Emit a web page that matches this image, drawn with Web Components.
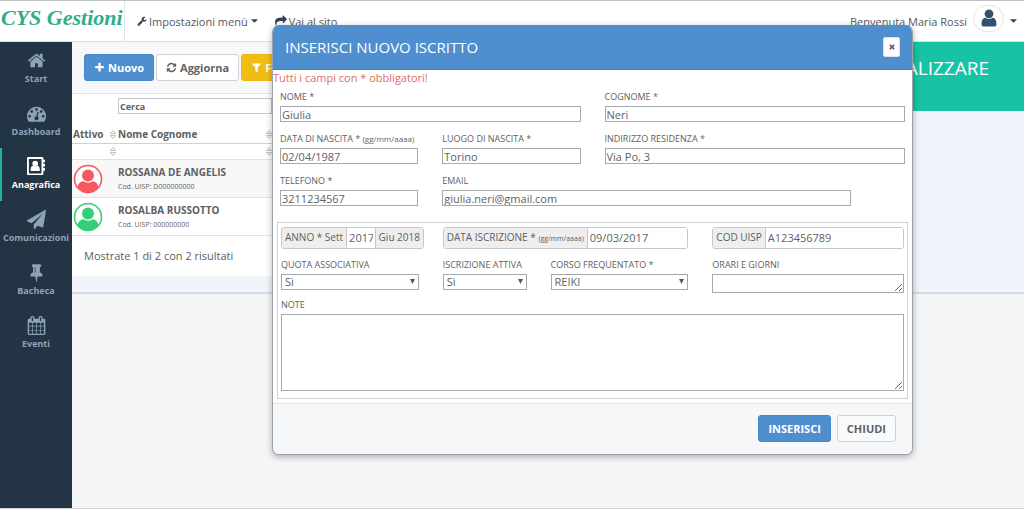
<!DOCTYPE html>
<html lang="it">
<head>
<meta charset="utf-8">
<title>CYS Gestioni</title>
<style>
  body { margin: 0; font-family: "Open Sans", "Noto Sans", sans-serif; font-size: 11px; color: #5e6062; background: #fff; }
</style>
</head>
<body>
<gestioni-app></gestioni-app>

<script>
const ICONS = {
  home: ['0 0 1792 1792', '<path d="M1472 992v480q0 26-19 45t-45 19h-384v-384h-256v384h-384q-26 0-45-19t-19-45v-480q0-1 .5-3t.5-3l575-474 575 474q1 2 1 6zm223-69l-62 74q-8 9-21 11h-3q-13 0-21-7l-692-577-692 577q-12 8-24 7-13-2-21-11l-62-74q-8-10-7-23.5t11-21.5l719-599q32-26 76-26t76 26l244 204v-195q0-14 9-23t23-9h192q14 0 23 9t9 23v408l219 182q10 8 11 21.5t-7 23.5z"/>'],
  gauge: ['0 0 1792 1792', '<path d="M384 1152q0-53-37.5-90.5t-90.5-37.5-90.5 37.5-37.5 90.5 37.5 90.5 90.5 37.5 90.5-37.5 37.5-90.5zm192-448q0-53-37.5-90.5t-90.5-37.5-90.5 37.5-37.5 90.5 37.5 90.5 90.5 37.5 90.5-37.5 37.5-90.5zm428 481l101-382q6-26-7.5-48.5t-38.5-29.5-48 6.5-30 39.5l-101 382q-60 5-107 43.5t-63 98.5q-20 77 20 146t117 89 146-20 89-117q16-60-6-117t-72-91zm660-33q0-53-37.5-90.5t-90.5-37.5-90.5 37.5-37.5 90.5 37.5 90.5 90.5 37.5 90.5-37.5 37.5-90.5zm-640-640q0-53-37.5-90.5t-90.5-37.5-90.5 37.5-37.5 90.5 37.5 90.5 90.5 37.5 90.5-37.5 37.5-90.5zm448 192q0-53-37.5-90.5t-90.5-37.5-90.5 37.5-37.5 90.5 37.5 90.5 90.5 37.5 90.5-37.5 37.5-90.5zm320 448q0 261-141 483-19 29-54 29h-1402q-35 0-54-29-141-221-141-483 0-182 71-348t191-286 286-191 348-71 348 71 286 191 191 286 71 348z"/>'],
  book: ['0 0 18 18', '<path fill-rule="evenodd" d="M1 0h13.500a1 1 0 0 1 1 1v1.500h1.500v2.500h-1.500v1.500h1.500v2.500h-1.500v1.500h1.500v2.500h-1.500v3a1 1 0 0 1-1 1H1a1 1 0 0 1-1-1V1a1 1 0 0 1 1-1zm.8 1.800v13.900h11.900V1.800z"/><circle cx="7.800" cy="6.200" r="2.700"/><path d="M3.500 13.200v-1.700c0-2 1-3 2.300-3.100q2 1.400 4 0c1.400.1 2.300 1.100 2.300 3.100v1.700z"/>'],
  plane: ['0 0 1792 1792', '<path d="M1764 11q33 24 27 64l-256 1536q-5 29-32 45-14 8-31 8-11 0-24-5l-453-185-242 295q-18 23-49 23-13 0-22-4-19-7-30.500-23.500t-11.500-36.500v-349l864-1059-1069 925-395-162q-37-14-40-55-2-40 32-59l1664-960q15-9 32-9 20 0 36 11z"/>'],
  pin: ['0 0 1792 1792', '<path d="M800 864v-448q0-14-9-23t-23-9-23 9-9 23v448q0 14 9 23t23 9 23-9 9-23zm672 352q0 26-19 45t-45 19h-429l-51 483q-2 12-10.500 20.500t-20.500 8.500h-1q-27 0-32-27l-76-485h-404q-26 0-45-19t-19-45q0-123 78.500-221.500t177.500-98.500v-512q-52 0-90-38t-38-90 38-90 90-38h640q52 0 90 38t38 90-38 90-90 38v512q99 0 177.500 98.500t78.500 221.500z"/>'],
  calendar: ['0 0 1792 1792', '<path d="M192 1664h288v-288h-288v288zm352 0h320v-288h-320v288zm-352-352h288v-320h-288v320zm352 0h320v-320h-320v320zm-352-384h288v-288h-288v288zm736 736h320v-288h-320v288zm-384-736h320v-288h-320v288zm768 736h288v-288h-288v288zm-384-352h320v-320h-320v320zm-352-864v-288q0-13-9.500-22.500t-22.500-9.500h-64q-13 0-22.500 9.500t-9.500 22.500v288q0 13 9.500 22.500t22.500 9.500h64q13 0 22.500-9.500t9.500-22.500zm736 864h288v-320h-288v320zm-384-384h320v-288h-320v288zm384 0h288v-288h-288v288zm32-480v-288q0-13-9.500-22.500t-22.500-9.500h-64q-13 0-22.500 9.500t-9.500 22.500v288q0 13 9.500 22.500t22.500 9.500h64q13 0 22.500-9.500t9.500-22.500zm384-64v1280q0 52-38 90t-90 38h-1408q-52 0-90-38t-38-90v-1280q0-52 38-90t90-38h128v-96q0-66 47-113t113-47h64q66 0 113 47t47 113v96h384v-96q0-66 47-113t113-47h64q66 0 113 47t47 113v96h128q52 0 90 38t38 90z"/>'],
  wrench: ['0 0 1792 1792', '<path d="M448 1472q0-26-19-45t-45-19-45 19-19 45 19 45 45 19 45-19 19-45zm644-420l-682 682q-37 37-90 37-52 0-91-37l-106-108q-38-36-38-90 0-53 38-91l681-681q39 98 114.500 173.500t173.500 114.500zm634-435q0 39-23 106-47 134-164.500 217.500t-258.500 83.500q-185 0-316.500-131.500t-131.500-316.500 131.500-316.500 316.500-131.500q58 0 121.500 16.500t107.500 46.500q16 11 16 28t-16 28l-293 169v224l193 107q5-3 79-48.500t135.500-81 70.500-35.500q15 0 23.500 10t8.500 25z"/>'],
  share: ['0 0 1792 1792', '<path d="M1792 640q0 26-19 45l-512 512q-19 19-45 19t-45-19-19-45v-256h-224q-98 0-175.500 6t-154 21.500-133 42.500-105.500 69.500-80 101-48.500 138.500-17.500 181q0 55 5 123 0 6 2.500 23.500t2.500 26.500q0 15-8.500 25t-23.500 10q-16 0-28-17-7-9-13-22t-13.500-30-10.500-24q-127-285-127-451 0-199 53-333 162-403 875-403h224v-256q0-26 19-45t45-19 45 19l512 512q19 19 19 45z"/>'],
  plus: ['0 0 1792 1792', '<path d="M1600 736v192q0 40-28 68t-68 28h-416v416q0 40-28 68t-68 28h-192q-40 0-68-28t-28-68v-416h-416q-40 0-68-28t-28-68v-192q0-40 28-68t68-28h416v-416q0-40 28-68t68-28h192q40 0 68 28t28 68v416h416q40 0 68 28t28 68z"/>'],
  refresh: ['0 0 1792 1792', '<path d="M1639 1056q0 5-1 7-64 268-268 434.500t-478 166.500q-146 0-282.500-55t-243.500-157l-129 129q-19 19-45 19t-45-19-19-45v-448q0-26 19-45t45-19h448q26 0 45 19t19 45-19 45l-137 137q71 66 161 102t187 36q134 0 250-65t186-179q11-17 53-117 8-23 30-23h192q13 0 22.500 9.500t9.500 22.500zm25-800v448q0 26-19 45t-45 19h-448q-26 0-45-19t-19-45 19-45l138-138q-148-137-349-137-134 0-250 65t-186 179q-11 17-53 117-8 23-30 23h-199q-13 0-22.500-9.500t-9.500-22.500v-7q65-268 270-434.500t480-166.500q146 0 284 55.500t245 156.500l130-129q19-19 45-19t45 19 19 45z"/>'],
  filter: ['0 0 1792 1792', '<path d="M1595 295q17 41-14 70l-493 493v742q0 42-39 59-13 5-25 5-27 0-45-19l-256-256q-19-19-19-45v-486l-493-493q-31-29-14-70 17-39 59-39h1280q42 0 59 39z"/>'],
  user: ['0 0 16 18', '<circle cx="8" cy="4.800" r="4.400"/><path d="M.5 15.500c0-4 1.200-6.600 3.900-6.800q3.600 2.600 7.200 0c2.700.2 3.900 2.800 3.900 6.800q0 2-2.200 2H2.700q-2.200 0-2.200-2z"/>'],
  caret: ['0 0 8 4', '<path d="M0 0h8L4 4z"/>'],
  arrow: ['0 0 6 6', '<path d="M0 0h6L3 6z"/>'],
  sort: ['0 0 6 9', '<path d="M3 .5 5.500 3.500H.5zM3 8.500 5.500 5.500H.5z" fill="none" stroke="currentColor" stroke-width=".9"/>'],
  close: ['0 0 6 6', '<path d="M.8.8 5.200 5.200M5.200.8.8 5.200" stroke="currentColor" stroke-width="1.700"/>'],
  member: ['0 0 30 30', '<circle cx="15" cy="15" r="13.500" fill="#fff" stroke="currentColor" stroke-width="1.600"/><circle cx="15" cy="11.500" r="6"/><path d="M4.500 23.500c.6-4 3-5.800 6-6.200q4.500 3 9 0c3 .4 5.400 2.200 6 6.200A13.500 13.500 0 0 1 4.500 23.500z"/>']
};

/* Registers an element whose shadow root is filled from a template. */
function define(name, html) {
  customElements.define(name, class extends HTMLElement {
    connectedCallback() {
      if (this.shadowRoot) return;
      const t = document.createElement('template');
      t.innerHTML = typeof html === 'function' ? html(this) : html;
      this.attachShadow({ mode: 'open' }).append(t.content.cloneNode(true));
    }
  });
}
const attr = (el, n) => el.getAttribute(n) || '';

define('ui-icon', el => {
  const [box, body] = ICONS[attr(el, 'name')];
  return `<style>
    :host { display: inline-block; width: 12px; height: 12px; flex: none; }
    svg { display: block; width: 100%; height: 100%; fill: currentColor; }
  </style><svg viewBox="${box}" aria-hidden="true">${body}</svg>`;
});

define('ui-button', el => `<style>
    :host { display: inline-block; }
    button { display: flex; align-items: center; gap: 3px; box-sizing: border-box; height: 27px; padding: 0 9px; border: 1px solid; border-radius: 3px; font: bold 11px/14px "Open Sans", "Noto Sans", sans-serif; white-space: nowrap; }
    .primary { background: #4f8fd0; border-color: #4787c9; color: #fff; }
    .plain { background: #fff; border-color: #ced0d4; color: #606266; }
    .soft { background: #f9fafb; border-color: #ced0d4; color: #606266; }
    .warn { background: #f2bd13; border-color: #eab60f; color: #fff; }
  </style><button type="button" class="${attr(el, 'kind')}"><slot></slot></button>`);

define('app-header', `<style>
    :host { display: flex; align-items: center; box-sizing: border-box; height: 42px; border-top: 1px solid #bfc2c7; border-bottom: 1px solid #dcdfe3; background: #fff; color: #55585c; }
    .logo { box-sizing: border-box; height: 100%; width: 125px; padding-left: 1px; border-right: 1px solid #e3e5e8; font: italic bold 22px/34px "Liberation Serif", serif; color: #31ad87; text-decoration: none; white-space: nowrap; }
    nav { display: flex; flex: 1; padding-left: 12px; gap: 17px; }
    nav a, .user { display: flex; align-items: center; gap: 2px; color: inherit; text-decoration: none; white-space: nowrap; }
    ui-icon { color: #2f4257; }
    .wrench { width: 10px; height: 10px; }
    .caret { width: 7px; height: 4px; margin-left: 1px; }
    .avatar { display: flex; justify-content: center; align-items: center; box-sizing: border-box; width: 31px; height: 27px; margin: 0 3px 6px 4px; border: 1px solid #e2e4e7; border-radius: 14px; }
    .avatar ui-icon { width: 16px; height: 18px; color: #34506f; }
    .user { padding-right: 7px; }
  </style>
  <a class="logo" href="#">CYS Gestioni</a>
  <nav>
    <a href="#"><ui-icon class="wrench" name="wrench"></ui-icon>Impostazioni menù<ui-icon class="caret" name="caret"></ui-icon></a>
    <a href="#"><ui-icon name="share"></ui-icon>Vai al sito</a>
  </nav>
  <a class="user" href="#">Benvenuta Maria Rossi<span class="avatar"><ui-icon name="user"></ui-icon></span><ui-icon class="caret" name="caret"></ui-icon></a>`);

define('nav-item', el => `<style>
    :host { display: block; }
    a { display: flex; flex-direction: column; align-items: center; gap: 2px; box-sizing: border-box; height: 53px; padding-top: 9px; font: bold 9px/14px "Open Sans", "Noto Sans", sans-serif; color: #8fa3b7; text-decoration: none; white-space: nowrap; }
    :host([active]) a { color: #fff; box-shadow: inset 2px 0 #1fb59a; }
    ui-icon { width: 19px; height: 19px; }
  </style><a href="#"><ui-icon name="${attr(el, 'icon')}"></ui-icon><slot></slot></a>`);

define('side-nav', `<style>
    :host { display: block; width: 72px; flex: none; background: #233445; }
  </style>
  <nav aria-label="Principale">
    <nav-item icon="home">Start</nav-item>
    <nav-item icon="gauge">Dashboard</nav-item>
    <nav-item icon="book" active>Anagrafica</nav-item>
    <nav-item icon="plane">Comunicazioni</nav-item>
    <nav-item icon="pin">Bacheca</nav-item>
    <nav-item icon="calendar">Eventi</nav-item>
  </nav>`);

define('members-panel', `<style>
    :host { display: block; background: #fff; }
    .tools { display: flex; gap: 2px; padding: 12px; background: #f7f8f9; border-bottom: 1px solid #e3e5e8; }
    .tools ui-icon { width: 11px; height: 11px; }
    input { display: block; box-sizing: border-box; width: 154px; height: 16px; margin: 4px 0 11px 46px; padding: 0 1px; border: 1px solid #c3c5c8; font: bold 9px/12px "Open Sans", "Noto Sans", sans-serif; }
    input::placeholder { color: #5e6062; opacity: 1; }
    table { width: 100%; table-layout: fixed; border-collapse: collapse; }
    .c1 { width: 46px; } .c2 { width: 156px; }
    th, td { padding: 0; text-align: left; }
    th { font: bold 10px/14px "Open Sans", "Noto Sans", sans-serif; height: 18px; border-bottom: 1px solid #cfd1d4; }
    th div { display: flex; align-items: center; justify-content: space-between; padding: 0 2px 0 0; white-space: nowrap; }
    th:first-child div { padding-left: 1px; }
    tr + tr th { height: 15px; border-color: #dfe1e3; }
    tr + tr th div { justify-content: flex-end; }
    th ui-icon { width: 6px; height: 9px; color: #b4b7bb; }
    td { height: 37px; border-bottom: 1px solid #dfe1e3; font-size: 7px; line-height: 13px; white-space: nowrap; }
    tbody tr:first-child { background: #f8f8f8; }
    b { display: block; font-size: 10px; line-height: 16px; }
    td ui-icon { display: block; width: 30px; height: 30px; margin-left: 1px; }
    .off { color: #f4595f; } .on { color: #34cf77; }
    p { margin: 0; padding: 12px; line-height: 16px; }
  </style>
  <div class="tools">
    <ui-button kind="primary"><ui-icon name="plus"></ui-icon>Nuovo</ui-button>
    <ui-button kind="plain"><ui-icon name="refresh"></ui-icon>Aggiorna</ui-button>
    <ui-button kind="warn"><ui-icon name="filter"></ui-icon>Filtra</ui-button>
  </div>
  <input type="search" placeholder="Cerca" aria-label="Cerca">
  <table>
    <colgroup><col class="c1"><col class="c2"><col></colgroup>
    <thead>
      <tr><th><div>Attivo<ui-icon name="sort"></ui-icon></div></th><th><div>Nome Cognome<ui-icon name="sort"></ui-icon></div></th><th></th></tr>
      <tr><th><div><ui-icon name="sort"></ui-icon></div></th><th><div><ui-icon name="sort"></ui-icon></div></th><th></th></tr>
    </thead>
    <tbody>
      <tr><td><ui-icon class="off" name="member"></ui-icon></td><td><b>ROSSANA DE ANGELIS</b>Cod. UISP: D000000000</td><td></td></tr>
      <tr><td><ui-icon class="on" name="member"></ui-icon></td><td><b>ROSALBA RUSSOTTO</b>Cod. UISP: 000000000</td><td></td></tr>
    </tbody>
  </table>
  <p>Mostrate 1 di 2 con 2 risultati</p>`);

/* Labelled control; type: text (default), select or area. */
define('form-field', el => {
  const v = attr(el, 'value'), type = attr(el, 'type');
  const control = type === 'select'
    ? `<span class="pick"><select id="c"><option>${v}</option></select><ui-icon name="arrow"></ui-icon></span>`
    : type === 'area' ? `<textarea id="c"></textarea>` : `<input id="c" type="text" value="${v}">`;
  return `<style>
    :host { display: block; min-width: 0; }
    label { display: block; font-size: 9px; line-height: 12px; margin-bottom: 3px; white-space: nowrap; }
    small { font-size: 8px; }
    input, select, textarea { display: block; box-sizing: border-box; width: 100%; height: 16px; margin: 0; padding: 0 1px; border: 1px solid #a6a8aa; border-radius: 0; background: #fff; color: #606264; font: 11px/14px "Open Sans", "Noto Sans", sans-serif; }
    select { appearance: none; padding: 0 3px; }
    textarea { height: var(--area-height, 19px); min-height: 0; resize: both; }
    .pick { display: block; position: relative; }
    .pick ui-icon { position: absolute; right: 4px; top: 5px; width: 5px; height: 5px; color: #55585a; pointer-events: none; }
  </style><label for="c">${attr(el, 'label')}${attr(el, 'hint') ? ` <small>${attr(el, 'hint')}</small>` : ''}</label>${control}`;
});

/* Input joined to grey captions before and after it. */
define('input-group', el => `<style>
    :host { display: flex; box-sizing: border-box; height: 22px; border: 1px solid #c6c8ca; border-radius: 3px; overflow: hidden; font-size: 10px; line-height: 19px; white-space: nowrap; }
    label, span { padding: 0 3px; background: #eeeeef; }
    small { font-size: 7px; }
    input { flex: 1; min-width: 0; padding: 0 2px; border: 0; border-left: 1px solid #c6c8ca; color: #606264; font: 11px/20px "Open Sans", "Noto Sans", sans-serif; }
    span { border-left: 1px solid #c6c8ca; }
  </style><label for="c">${attr(el, 'label')}${attr(el, 'hint') ? ` <small>${attr(el, 'hint')}</small>` : ''}</label><input id="c" type="text" value="${attr(el, 'value')}">${attr(el, 'after') ? `<span>${attr(el, 'after')}</span>` : ''}`);

define('member-dialog', `<style>
    :host { display: block; border: 1px solid #9da2a9; border-top: 0; border-radius: 7px; overflow: hidden; background: #fff; box-shadow: 0 2px 6px rgba(0,0,0,.3); }
    header { display: flex; align-items: center; justify-content: space-between; height: 44px; padding: 0 12px; background: #4f8fd0; border-bottom: 1px solid #4680bb; }
    h2 { margin: 0; font-size: 15px; font-weight: 400; color: #fff; }
    header button { display: flex; align-items: center; justify-content: center; width: 17px; height: 20px; padding: 0; border: 1px solid #dde2e8; border-radius: 2px; background: #fff; color: #606266; }
    header ui-icon { width: 6px; height: 6px; }
    .warning { margin: 0; line-height: 16px; color: #dd6c6a; }
    .grid { display: grid; grid-template-columns: repeat(12, minmax(0, 1fr)); column-gap: 24px; row-gap: 11px; }
    .person { padding: 5px 7px 16px; }
    fieldset { margin: 0 4px 4px; padding: 4px 3px 7px; border: 1px solid #cfd1d3; min-width: 0; }
    .s2 { grid-column: span 2; } .s3 { grid-column: span 3; } .s4 { grid-column: span 4; }
    .s5 { grid-column: span 5; } .s6 { grid-column: span 6; } .s8 { grid-column: span 8; }
    .year { width: 143px; }
    .groups { margin-bottom: 10px; }
    .notes { --area-height: 77px; margin-top: 6px; }
    footer { display: flex; justify-content: flex-end; gap: 6px; padding: 11px 16px 12px; border-top: 1px solid #e2e5e8; background: #f6f7f9; }
  </style>
  <header><h2>INSERISCI NUOVO ISCRITTO</h2><button type="button" aria-label="Chiudi finestra"><ui-icon name="close"></ui-icon></button></header>
  <form>
    <p class="warning">Tutti i campi con * obbligatori!</p>
    <div class="grid person">
      <form-field class="s6" label="NOME *" value="Giulia"></form-field>
      <form-field class="s6" label="COGNOME *" value="Neri"></form-field>
      <form-field class="s3" label="DATA DI NASCITA *" hint="(gg/mm/aaaa)" value="02/04/1987"></form-field>
      <form-field class="s3" label="LUOGO DI NASCITA *" value="Torino"></form-field>
      <form-field class="s6" label="INDIRIZZO RESIDENZA *" value="Via Po, 3"></form-field>
      <form-field class="s3" label="TELEFONO *" value="3211234567"></form-field>
      <form-field class="s8" label="EMAIL" value="giulia.neri@gmail.com"></form-field>
    </div>
    <fieldset>
      <div class="grid groups">
        <input-group class="s3 year" label="ANNO * Sett" value="2017" after="Giu 2018"></input-group>
        <input-group class="s5" label="DATA ISCRIZIONE *" hint="(gg/mm/aaaa)" value="09/03/2017"></input-group>
        <input-group class="s4" label="COD UISP" value="A123456789"></input-group>
      </div>
      <div class="grid">
        <form-field class="s3" type="select" label="QUOTA ASSOCIATIVA" value="Sì"></form-field>
        <form-field class="s2" type="select" label="ISCRIZIONE ATTIVA" value="Sì"></form-field>
        <form-field class="s3" type="select" label="CORSO FREQUENTATO *" value="REIKI"></form-field>
        <form-field class="s4" type="area" label="ORARI E GIORNI"></form-field>
      </div>
      <form-field class="notes" type="area" label="NOTE"></form-field>
    </fieldset>
  </form>
  <footer><ui-button kind="primary">INSERISCI</ui-button><ui-button kind="soft">CHIUDI</ui-button></footer>`);

define('gestioni-app', `<style>
    :host { display: flex; flex-direction: column; box-sizing: border-box; min-height: 100vh; padding-bottom: 1px; position: relative; }
    .body { display: flex; flex: 1; border-bottom: 1px solid #d0d2d5; }
    main { flex: 1; min-width: 0; background: #f4f5f7; }
    .top { display: grid; grid-template-columns: 1fr 1fr; align-items: start; padding-bottom: 16px; border-bottom: 2px solid #d5dae4; background: #f0f3f9; }
    .card { box-sizing: border-box; height: 69px; padding: 13px 35px; background: #17c3a5; color: #fff; font-size: 19px; line-height: 27px; text-align: right; }
    member-dialog { position: absolute; top: 25px; left: 272px; right: 111px; }
  </style>
  <app-header></app-header>
  <div class="body">
    <side-nav></side-nav>
    <main>
      <div class="top">
        <members-panel></members-panel>
        <div class="card">VISUALIZZARE</div>
      </div>
    </main>
  </div>
  <member-dialog role="dialog" aria-label="Inserisci nuovo iscritto"></member-dialog>`);
</script>
</body>
</html>
